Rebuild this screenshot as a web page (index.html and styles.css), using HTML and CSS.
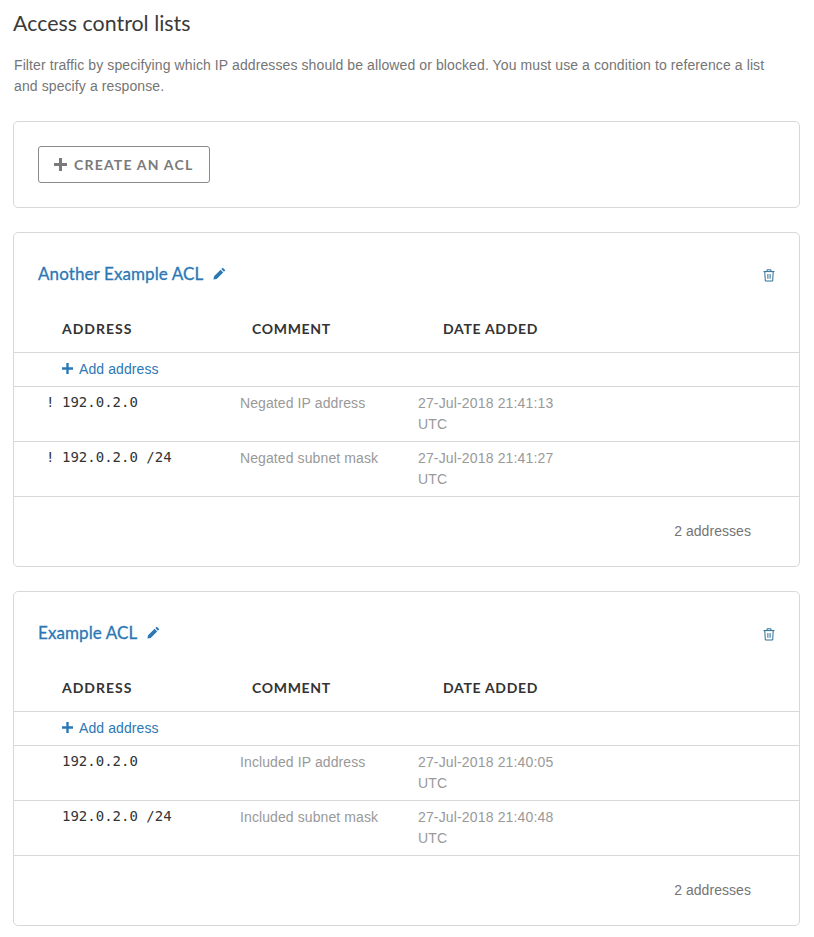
FILE: index.html
```html
<!DOCTYPE html>
<html lang="en">
<head>
<meta charset="utf-8">
<title>Access control lists</title>
<link rel="stylesheet" href="styles.css">
</head>
<body>
<main class="page">
  <h1 class="title">Access control lists</h1>
  <p class="intro">Filter traffic by specifying which IP addresses should be allowed or blocked. You must use a condition to reference a list and specify a response.</p>

  <section class="card card-create">
    <button class="btn-create"><svg class="icon-plus-grey" viewBox="0 0 12 12"><path d="M4.6 0h2.8v4.6H12v2.8H7.4V12H4.6V7.4H0V4.6h4.6z"/></svg>CREATE AN ACL</button>
  </section>

  <section class="card">
    <header class="card-head">
      <h2 class="acl-name">Another Example ACL</h2>
      <svg class="icon-pencil" viewBox="0 0 12 12"><path d="M9 .6l2.4 2.4-1.3 1.3-2.4-2.4zM7 2.6L9.4 5 3.4 11 .4 11.6 1 8.6z"/></svg>
      <svg class="icon-trash" viewBox="0 0 12 13"><path d="M.5 2.6h11M4 2.4V.8h4v1.6M1.8 2.8l.5 9.2h7.4l.5-9.2M4.9 5v4.8M7.1 5v4.8"/></svg>
    </header>
    <div class="col-heads"><span class="ch-address">ADDRESS</span><span class="ch-comment">COMMENT</span><span>DATE ADDED</span></div>
    <div class="add-row"><svg class="icon-plus" viewBox="0 0 12 12"><path d="M4.7 0h2.6v4.7H12v2.6H7.3V12H4.7V7.3H0V4.7h4.7z"/></svg>Add address</div>
    <div class="row"><span class="neg">!</span><span class="addr">192.0.2.0</span><span class="comment">Negated IP address</span><span class="date">27-Jul-2018 21:41:13 UTC</span></div>
    <div class="row"><span class="neg">!</span><span class="addr">192.0.2.0 /24</span><span class="comment">Negated subnet mask</span><span class="date">27-Jul-2018 21:41:27 UTC</span></div>
    <footer class="card-foot">2 addresses</footer>
  </section>

  <section class="card">
    <header class="card-head">
      <h2 class="acl-name">Example ACL</h2>
      <svg class="icon-pencil" viewBox="0 0 12 12"><path d="M9 .6l2.4 2.4-1.3 1.3-2.4-2.4zM7 2.6L9.4 5 3.4 11 .4 11.6 1 8.6z"/></svg>
      <svg class="icon-trash" viewBox="0 0 12 13"><path d="M.5 2.6h11M4 2.4V.8h4v1.6M1.8 2.8l.5 9.2h7.4l.5-9.2M4.9 5v4.8M7.1 5v4.8"/></svg>
    </header>
    <div class="col-heads"><span class="ch-address">ADDRESS</span><span class="ch-comment">COMMENT</span><span>DATE ADDED</span></div>
    <div class="add-row"><svg class="icon-plus" viewBox="0 0 12 12"><path d="M4.7 0h2.6v4.7H12v2.6H7.3V12H4.7V7.3H0V4.7h4.7z"/></svg>Add address</div>
    <div class="row"><span class="neg"></span><span class="addr">192.0.2.0</span><span class="comment">Included IP address</span><span class="date">27-Jul-2018 21:40:05 UTC</span></div>
    <div class="row"><span class="neg"></span><span class="addr">192.0.2.0 /24</span><span class="comment">Included subnet mask</span><span class="date">27-Jul-2018 21:40:48 UTC</span></div>
    <footer class="card-foot">2 addresses</footer>
  </section>
</main>
</body>
</html>
```
FILE: styles.css
```css
* { box-sizing: border-box; }
html, body { margin: 0; background: #fff; }
body { font-family: "Liberation Sans", Arial, sans-serif; color: #757575; font-size: 14px; letter-spacing: .1px; }
.page { padding: 0 14px 0 13px; }
.title {
  margin: 0; padding-top: 10px; height: 55px;
  font-family: Lato, sans-serif; font-weight: 400; font-size: 21.4px; line-height: 27px; color: #3a3a3a; letter-spacing: 0;
}
.intro { margin: 0 0 24px 1px; height: 42px; line-height: 21px; font-size: 14px; color: #757575; width: 760px; }
.card { border: 1px solid #d8d8d8; border-radius: 5px; margin-bottom: 24px; background: #fff; }
.card-create { height: 87px; padding: 24px; }
.btn-create {
  display: flex; align-items: center; width: 172px; height: 37px; padding: 0 0 0 15px;
  background: #fff; border: 1px solid #8a8a8a; border-radius: 3px;
  font-family: Lato, sans-serif; font-weight: 700; font-size: 14px; letter-spacing: 1.2px; color: #7a7a7a;
}
.icon-plus-grey { width: 13px; height: 13px; margin-right: 7px; fill: #7a7a7a; }
.card-head { display: flex; align-items: center; height: 67px; padding: 13px 24px 0 24px; }
.acl-name { margin: 0; font-family: Lato, sans-serif; font-weight: 400; font-size: 17px; letter-spacing: .1px; color: #2b78b5; -webkit-text-stroke: .3px #2b78b5; }
.icon-pencil { width: 13px; height: 13px; margin-left: 10px; fill: #2b78b5; }
.icon-trash { width: 12px; height: 13px; margin-left: auto; margin-top: 4px; fill: none; stroke: #2a6f96; stroke-width: 1; }
.col-heads {
  display: flex; height: 53px; padding: 20px 0 0 48px; border-bottom: 1px solid #d8d8d8;
  font-family: Lato, sans-serif; font-weight: 700; font-size: 14px; letter-spacing: .7px; color: #333; line-height: 18px;
}
.ch-address { width: 190px; letter-spacing: 1px; }
.ch-comment { width: 191px; }
.add-row {
  display: flex; align-items: center; height: 34px; padding: 0 0 2px 48px; border-bottom: 1px solid #d8d8d8;
  color: #2b78b5; font-size: 14px;
}
.icon-plus { width: 11px; height: 11px; margin-right: 6px; fill: #2b78b5; }
.row { display: flex; height: 55px; padding-top: 6px; border-bottom: 1px solid #d8d8d8; line-height: 21px; }
.neg { width: 48px; padding-left: 32px; font-family: "DejaVu Sans Mono", monospace; font-size: 14px; letter-spacing: 0; line-height: 19px; color: #333; }
.addr { width: 178px; font-family: "DejaVu Sans Mono", monospace; font-size: 14px; letter-spacing: 0; line-height: 19px; color: #333; }
.comment { width: 178px; color: #999; }
.date { width: 150px; color: #999; letter-spacing: .15px; }
.card-foot { height: 69px; padding: 24px 48px 0 0; text-align: right; line-height: 21px; color: #757575; letter-spacing: .05px; }
```
